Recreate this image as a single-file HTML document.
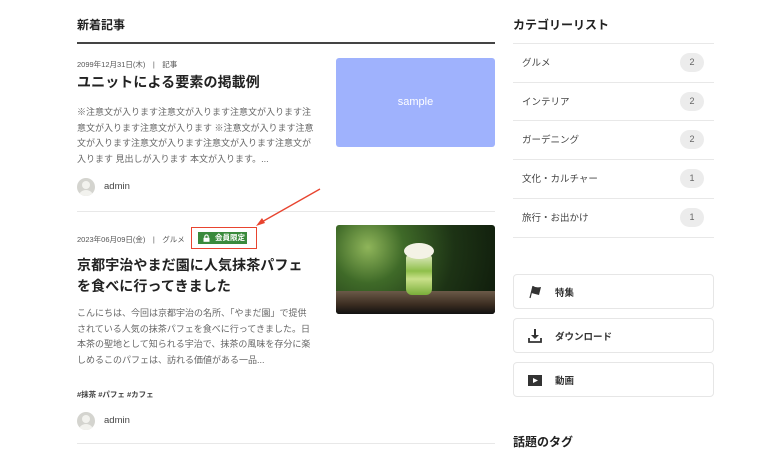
<!DOCTYPE html>
<html><head><meta charset="utf-8"><style>
*{margin:0;padding:0;box-sizing:border-box}
body{width:775px;height:447px;overflow:hidden;background:#fff;font-family:"Liberation Sans","Noto Sans CJK JP",sans-serif;color:#333;position:relative}
.a{position:absolute;white-space:nowrap}
.h{font-size:12px;font-weight:bold;color:#222}
.meta{font-size:7.5px;color:#555}
.t{font-size:14px;font-weight:bold;color:#222;line-height:21px;letter-spacing:0.1px}
.ex{font-size:9px;color:#666;line-height:15.7px}
.av{width:18px;height:18px;border-radius:50%;background:#d4d4cf;overflow:hidden}
.av:after{content:"";position:absolute;left:5px;top:3px;width:8px;height:8px;border-radius:50%;background:#f2f2ee}
.av:before{content:"";position:absolute;left:2px;top:12px;width:14px;height:12px;border-radius:50%;background:#f2f2ee}
.ln{position:absolute;height:1px;background:#e8e8e8}
.ci{font-size:9.5px;color:#444}
.bd{position:absolute;left:680px;width:24px;height:19px;border-radius:10px;background:#ececec;font-size:9px;color:#666;text-align:center;line-height:19px}
.box{position:absolute;left:513px;width:201px;height:35px;border:1px solid #e6e6e6;border-radius:4px}
.bx{font-size:9.5px;font-weight:bold;color:#333;position:absolute;left:41px;top:10px}
</style></head><body>
<div class="a h" style="left:77px;top:16px">新着記事</div>
<div style="position:absolute;left:77px;top:42px;width:418px;height:2px;background:#444"></div>

<div class="a meta" style="left:77px;top:59px">2099年12月31日(木)　|　記事</div>
<div class="a t" style="left:77px;top:72px">ユニットによる要素の掲載例</div>
<div class="a ex" style="left:77px;top:105px">※注意文が入ります注意文が入ります注意文が入ります注<br>意文が入ります注意文が入ります ※注意文が入ります注意<br>文が入ります注意文が入ります注意文が入ります注意文が<br>入ります 見出しが入ります 本文が入ります。...</div>
<div class="a av" style="left:77px;top:178px"></div>
<div class="a" style="left:104px;top:181px;font-size:9.5px;color:#444">admin</div>
<div class="a" style="left:336px;top:58px;width:159px;height:89px;background:#9fb2fd;border-radius:3px;color:#fff;font-size:11px;text-align:center;line-height:89px">sample</div>
<div class="ln" style="left:77px;top:211px;width:418px"></div>

<div class="a meta" style="left:77px;top:234px">2023年06月09日(金)　|　グルメ</div>
<div class="a" style="left:191px;top:227px;width:66px;height:22px;border:1.5px solid #e8442f"></div>
<div class="a" style="left:198px;top:232px;width:49px;height:12px;background:#3a8a3c;color:#fff;font-size:7.5px;font-weight:bold;line-height:12px;padding-left:17px"><svg style="position:absolute;left:5px;top:2px" width="7" height="8"><path d="M1.8 4V2.6a1.7 1.7 0 0 1 3.4 0V4" fill="none" stroke="#fff" stroke-width="1.1"/><rect x="0.5" y="3.8" width="6" height="4" fill="#fff"/></svg>会員限定</div>
<svg class="a" style="left:250px;top:185px" width="75" height="45"><line x1="70" y1="4" x2="10" y2="38" stroke="#e8442f" stroke-width="1.3"/><polygon points="6,41 12,33 15,38" fill="#e8442f"/></svg>
<div class="a t" style="left:77px;top:255px">京都宇治やまだ園に人気抹茶パフェ<br>を食べに行ってきました</div>
<div class="a ex" style="left:77px;top:306px">こんにちは、今回は京都宇治の名所、「やまだ園」で提供<br>されている人気の抹茶パフェを食べに行ってきました。日<br>本茶の聖地として知られる宇治で、抹茶の風味を存分に楽<br>しめるこのパフェは、訪れる価値がある一品...</div>
<div class="a" style="left:77px;top:389px;font-size:7.5px;font-weight:bold;color:#444">#抹茶 #パフェ #カフェ</div>
<div class="a av" style="left:77px;top:412px"></div>
<div class="a" style="left:104px;top:415px;font-size:9.5px;color:#444">admin</div>
<div class="a" style="left:336px;top:225px;width:159px;height:89px;border-radius:3px;overflow:hidden;background:radial-gradient(circle at 20% 25%,#8fb55a 0,#3f6a28 25%,#1d3315 60%,#0e1a0b 100%)">
<div style="position:absolute;left:0;top:66px;width:159px;height:23px;background:linear-gradient(#6b5a48,#3a2c20 60%,#111)"></div>
<div style="position:absolute;left:70px;top:30px;width:26px;height:40px;background:linear-gradient(#dfe9c0,#8fbf4a 40%,#c9e08a 60%,#7aae3a);border-radius:3px 3px 6px 6px"></div>
<div style="position:absolute;left:68px;top:18px;width:30px;height:16px;border-radius:50%;background:#f4f2e6"></div>
</div>
<div class="ln" style="left:77px;top:443px;width:418px"></div>

<div class="a h" style="left:513px;top:16px">カテゴリーリスト</div>
<div class="ln" style="left:513px;top:43px;width:201px"></div>
<div class="a ci" style="left:522px;top:55px">グルメ</div><div class="bd" style="top:53px">2</div>
<div class="ln" style="left:513px;top:82px;width:201px"></div>
<div class="a ci" style="left:522px;top:94px">インテリア</div><div class="bd" style="top:92px">2</div>
<div class="ln" style="left:513px;top:120px;width:201px"></div>
<div class="a ci" style="left:522px;top:132px">ガーデニング</div><div class="bd" style="top:130px">2</div>
<div class="ln" style="left:513px;top:159px;width:201px"></div>
<div class="a ci" style="left:522px;top:171px">文化・カルチャー</div><div class="bd" style="top:169px">1</div>
<div class="ln" style="left:513px;top:198px;width:201px"></div>
<div class="a ci" style="left:522px;top:210px">旅行・お出かけ</div><div class="bd" style="top:208px">1</div>
<div class="ln" style="left:513px;top:237px;width:201px"></div>

<div class="box" style="top:274px"><svg style="position:absolute;left:14px;top:10px" width="14" height="14"><line x1="2" y1="13" x2="5" y2="1" stroke="#333" stroke-width="1.2"/><path d="M5 1 Q8 3 13 2 L11 10 Q7 9 3.5 8Z" fill="#333"/></svg><span class="bx">特集</span></div>
<div class="box" style="top:318px"><svg style="position:absolute;left:14px;top:10px" width="14" height="14"><path d="M6 0h2v6h3l-4 4-4-4h3z" fill="#333"/><path d="M1 9v4h12V9" fill="none" stroke="#333" stroke-width="1.8"/></svg><span class="bx">ダウンロード</span></div>
<div class="box" style="top:362px"><svg style="position:absolute;left:14px;top:12px" width="14" height="11"><rect width="14" height="11" fill="#333"/><path d="M5 3l5 2.5-5 2.5z" fill="#fff"/></svg><span class="bx">動画</span></div>

<div class="a h" style="left:513px;top:433px">話題のタグ</div>
</body></html>
